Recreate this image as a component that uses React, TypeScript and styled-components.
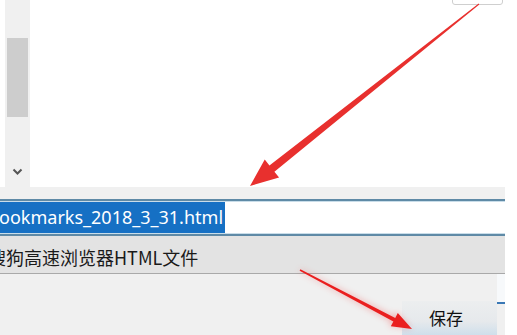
import { createGlobalStyle, styled } from "styled-components";

const GlobalStyle = createGlobalStyle`
	html, body {
		margin: 0;
		padding: 0;
		background: #ffffff;
	}
	body {
		font-family: "Noto Sans", "Noto Sans CJK SC", sans-serif;
	}
`;

const Page = styled.div`
	position: relative;
	width: 517px;
	height: 335px;
	overflow: hidden;
	background: #ffffff;
	display: flex;
`;

const Dialog = styled.div`
	width: 505px;
	height: 100%;
	display: flex;
	flex-direction: column;
	background: #f0f0f0;
`;

const BrowseArea = styled.div`
	height: 188px;
	display: flex;
	background: #ffffff;
`;

const Gutter = styled.div`
	width: 5px;
	background: #ffffff;
`;

const ScrollBar = styled.div`
	width: 25px;
	display: flex;
	flex-direction: column;
	align-items: center;
	background: #f0f0f0;
	padding-top: 38px;
	box-sizing: border-box;
`;

const Thumb = styled.div`
	width: 21px;
	height: 79px;
	background: #cdcdcd;
`;

const ScrollDown = styled.div`
	margin-top: auto;
	height: 19px;
	display: flex;
	align-items: flex-start;
	justify-content: center;
`;

const ListPane = styled.div`
	position: relative;
	flex: 1;
	background: #ffffff;
`;

const TopButtonEdge = styled.div`
	position: absolute;
	top: -4px;
	right: 2px;
	width: 51px;
	height: 9px;
	border: 1px solid #cfcfcf;
	border-radius: 0 0 3px 3px;
	background: #ffffff;
	box-sizing: border-box;
`;

const Band = styled.div`
	height: 12px;
	background: #f0f0f0;
`;

const FileNameBox = styled.div`
	height: 38px;
	box-sizing: border-box;
	border-top: 2px solid #5f8aa6;
	border-bottom: 2px solid #5f8aa6;
	box-shadow: inset 0 1px 0 #c9dde9, inset 0 -1px 0 #c9dde9;
	background: #ffffff;
	display: flex;
	align-items: center;
	overflow: hidden;
`;

const Selected = styled.span`
	display: inline-block;
	height: 31px;
	line-height: 31px;
	padding-right: 2px;
	margin-left: -12px;
	background: #1670c4;
	color: #ffffff;
	font-family: "Noto Sans", sans-serif;
	font-size: 18px;
	white-space: nowrap;
`;

const FileTypeRow = styled.div`
	height: 38px;
	box-sizing: border-box;
	padding-top: 4px;
	background: #e3e3e3;
	border-bottom: 1px solid #a9a9a9;
	display: flex;
	align-items: center;
	overflow: hidden;
`;

const FileTypeText = styled.span`
	margin-left: -12px;
	font-family: "Noto Sans CJK SC", "Noto Sans", sans-serif;
	font-size: 18px;
	color: #1a1a1a;
	white-space: nowrap;
`;

const Footer = styled.div`
	flex: 1;
	display: flex;
	justify-content: flex-end;
	align-items: flex-start;
	background: #f0f0f0;
`;

const SaveButton = styled.div`
	margin-top: 27px;
	width: 95px;
	height: 34px;
	box-sizing: border-box;
	padding-left: 27px;
	padding-top: 4px;
	background: linear-gradient(#eceeef 0%, #e6e9ec 60%, #cfdfeb 100%);
	font-family: "Noto Sans CJK SC", sans-serif;
	font-size: 17px;
	color: #111111;
`;

const EdgeStub = styled.div`
	width: 8px;
	height: 30px;
	background: #f7f9fb;
	border-bottom: 2px solid #3a78b5;
	box-sizing: border-box;
`;

const Annotations = styled.svg`
	position: absolute;
	inset: 0;
	pointer-events: none;
`;

type Pt = [number, number];

// tapered arrow: thin tail, wider neck, triangular head ending at tip
function arrowPoints(
	from: Pt,
	tip: Pt,
	tailWidth: number,
	neckWidth: number,
	headLen: number,
	headWidth: number,
) {
	const dx = tip[0] - from[0];
	const dy = tip[1] - from[1];
	const len = Math.hypot(dx, dy);
	const ux = dx / len;
	const uy = dy / len;
	const nx = -uy;
	const ny = ux;
	const bx = tip[0] - ux * headLen;
	const by = tip[1] - uy * headLen;
	const pts: Pt[] = [
		[from[0] + (nx * tailWidth) / 2, from[1] + (ny * tailWidth) / 2],
		[bx + (nx * neckWidth) / 2, by + (ny * neckWidth) / 2],
		[bx + (nx * headWidth) / 2, by + (ny * headWidth) / 2],
		tip,
		[bx - (nx * headWidth) / 2, by - (ny * headWidth) / 2],
		[bx - (nx * neckWidth) / 2, by - (ny * neckWidth) / 2],
		[from[0] - (nx * tailWidth) / 2, from[1] - (ny * tailWidth) / 2],
	];
	return pts.map((p) => p.join(",")).join(" ");
}

const App = () => {
	return (
		<>
			<GlobalStyle />
			<Page>
				<Dialog>
					<BrowseArea>
						<Gutter />
						<ScrollBar>
							<Thumb />
							<ScrollDown>
								<svg width="11" height="8" viewBox="0 0 11 8">
									<path d="M1.5 1.5 L5.5 5.5 L9.5 1.5" fill="none" stroke="#555" strokeWidth="2" />
								</svg>
							</ScrollDown>
						</ScrollBar>
						<ListPane>
							<TopButtonEdge />
						</ListPane>
					</BrowseArea>
					<Band />
					<FileNameBox>
						<Selected>bookmarks_2018_3_31.html</Selected>
					</FileNameBox>
					<FileTypeRow>
						<FileTypeText>搜狗高速浏览器HTML文件</FileTypeText>
					</FileTypeRow>
					<Footer>
						<SaveButton>保存</SaveButton>
						<EdgeStub />
					</Footer>
				</Dialog>
				<Annotations width="517" height="335" viewBox="0 0 517 335">
					<defs>
						<filter id="glow" x="-20%" y="-20%" width="140%" height="140%">
							<feGaussianBlur stdDeviation="3" />
						</filter>
					</defs>
					<polygon
						points={arrowPoints([479, 4], [250, 186], 1, 8, 28, 23)}
						fill="#e8302e"
					/>
					<polygon
						points={arrowPoints([300, 270], [412, 329], 2, 6, 22, 16)}
						fill="#f04a4a"
						opacity="0.35"
						filter="url(#glow)"
					/>
					<polygon
						points={arrowPoints([300, 270], [412, 329], 1.5, 4, 20, 15)}
						fill="#ea1f1f"
					/>
				</Annotations>
			</Page>
		</>
	);
};

export default App;
